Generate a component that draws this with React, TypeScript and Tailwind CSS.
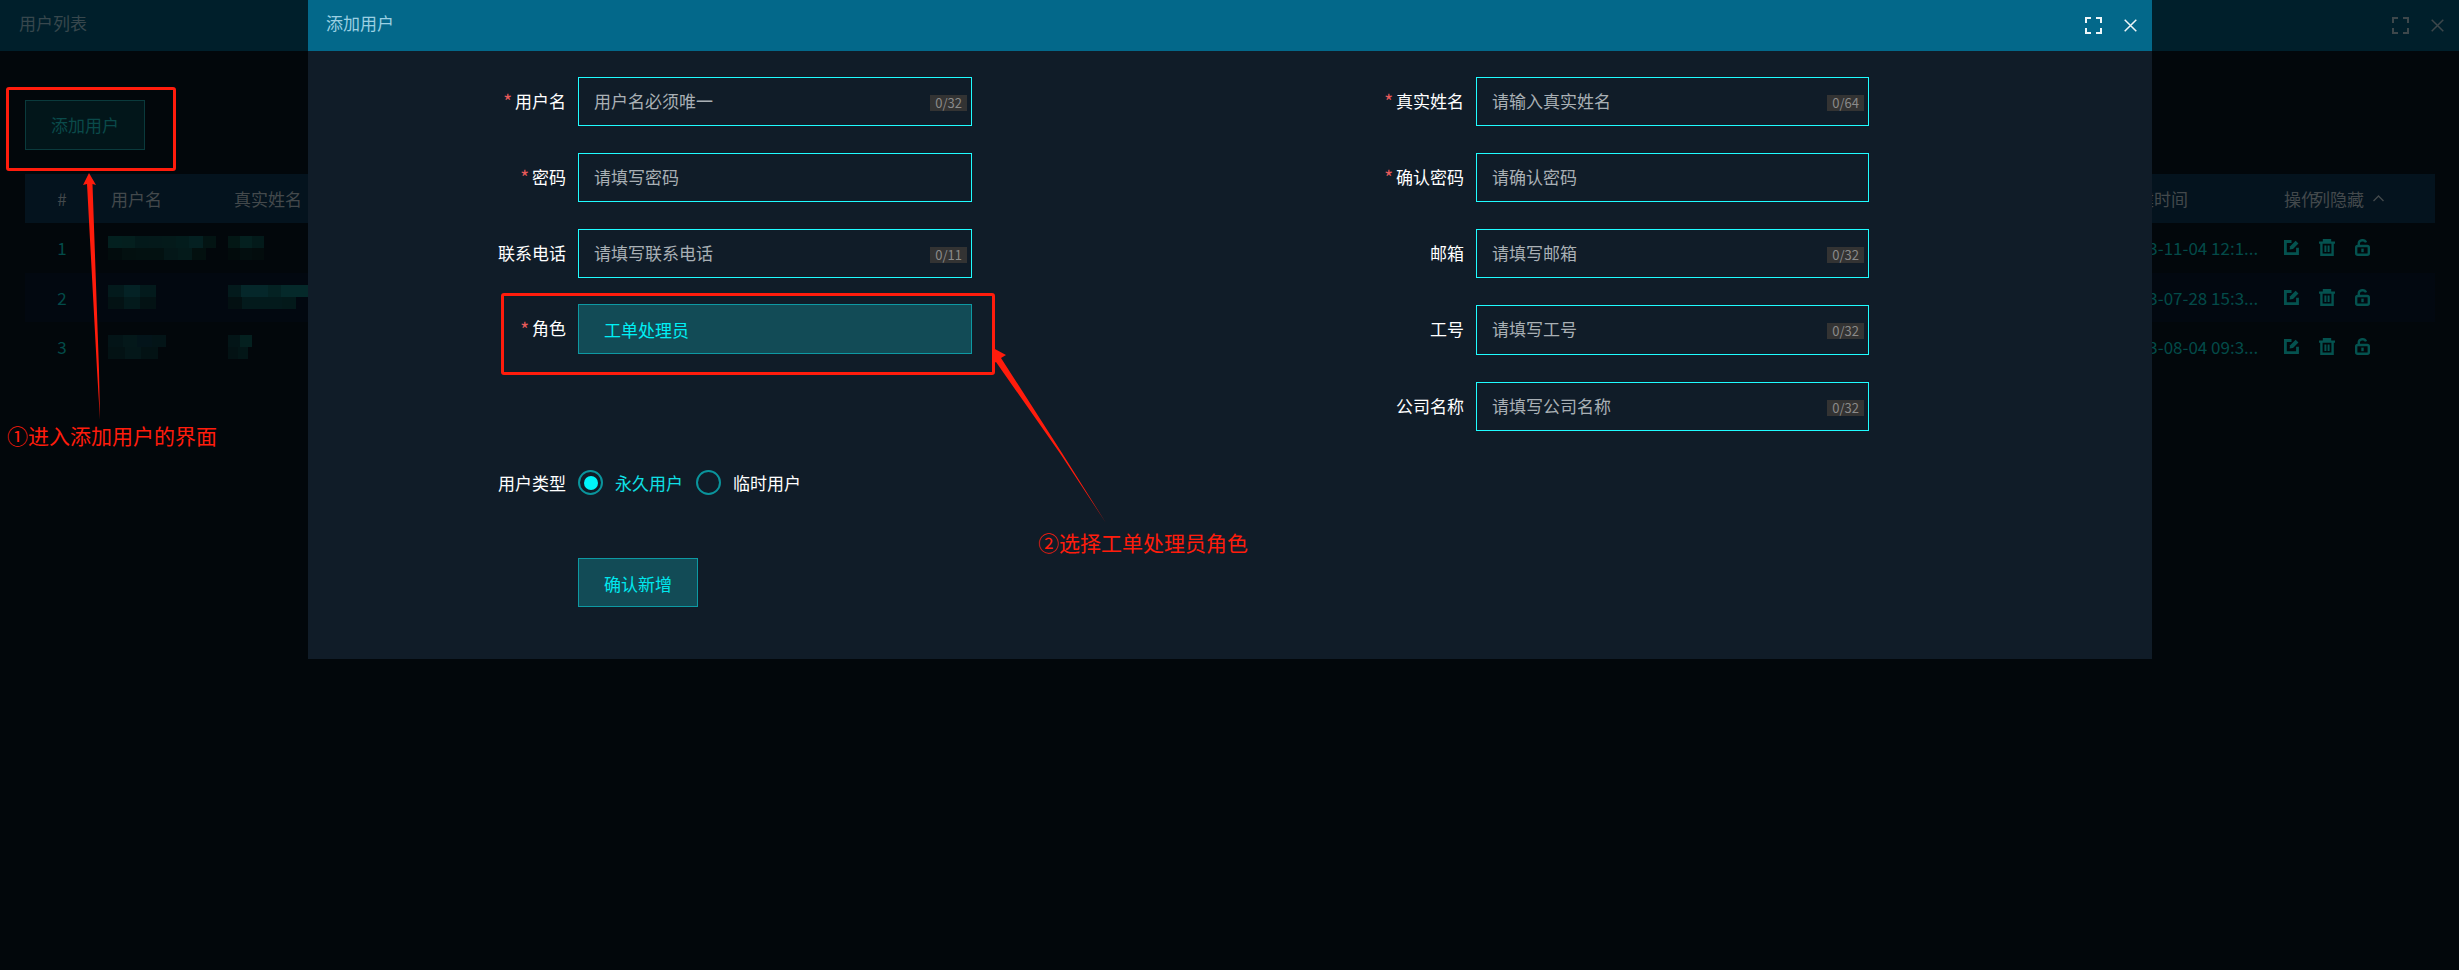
import React from "react";

const font = { fontFamily: '"Noto Sans CJK SC", "Noto Sans", sans-serif' };

function FullIcon({ className }: { className: string }) {
  return (
    <svg viewBox="0 0 17 17" className={className} fill="none" stroke="currentColor" strokeWidth="2">
      <path d="M1 6V1h5M11 1h5v5M16 11v5h-5M6 16H1v-5" />
    </svg>
  );
}
function CloseIcon({ className }: { className: string }) {
  return (
    <svg viewBox="0 0 13 13" className={className} fill="none" stroke="currentColor" strokeWidth="1.5">
      <path d="M0.7 0.7l11.6 11.6M12.3 0.7L0.7 12.3" />
    </svg>
  );
}
function EditIcon() {
  return (
    <svg viewBox="0 0 16 16" className="w-[15px] h-[15px]" fill="none" stroke="currentColor">
      <path d="M8 1.6H1.5v12.9h12.9V8.2" strokeWidth="3" />
      <path d="M6 10.2l.5-3.6L12.4.8 15.4 3.8 9.6 9.7z" fill="currentColor" stroke="none" />
    </svg>
  );
}
function TrashIcon() {
  return (
    <svg viewBox="0 0 16 17" className="w-[16px] h-[17px]" fill="none" stroke="currentColor" strokeWidth="2.4">
      <path d="M0 3.6h16M5 3.6V1.2h6v2.4M2.4 3.6v12.2h11.2V3.6" />
      <path d="M6.4 6.5v6.5M9.6 6.5v6.5" strokeWidth="2" />
    </svg>
  );
}
function LockIcon() {
  return (
    <svg viewBox="0 0 15 17" className="w-[15px] h-[17px]" fill="none" stroke="currentColor" strokeWidth="2.4">
      <rect x="1.2" y="7" width="12.6" height="8.8" rx="1.5" />
      <path d="M3.8 7V4.2a3.7 3.2 0 0 1 7.2-.8" />
      <path d="M7.5 9.6v3.6" />
    </svg>
  );
}

function Blur({ rows }: { rows: { w: number; c: string[] }[] }) {
  return (
    <div className="flex flex-col">
      {rows.map((r, i) => (
        <div key={i} className="flex h-[12px]" style={{ width: r.w }}>
          {r.c.map((c, j) => (
            <div key={j} className="flex-1 h-full" style={{ background: c }} />
          ))}
        </div>
      ))}
    </div>
  );
}

const tableRows = [
  {
    n: "1",
    t: "2023-11-04 12:1...",
    bg: "",
    user: [
      { w: 108, c: ["#03201f", "#041f1e", "#03191a", "#04191a", "#041a1a", "#031c1c", "#042021", "#031413"] },
      { w: 98, c: ["#020c0d", "#031010", "#031111", "#031111", "#041718", "#041a1a", "#03100f"] },
    ],
    name: [
      { w: 36, c: ["#031715", "#04201f", "#031a1a"] },
      { w: 36, c: ["#020b0c", "#030e0f", "#030c0d"] },
    ],
  },
  {
    n: "2",
    t: "2023-07-28 15:3...",
    bg: "bg-[#020810]",
    user: [
      { w: 48, c: ["#031a1c", "#042225", "#031a1c"] },
      { w: 48, c: ["#031214", "#031a1c", "#031214"] },
    ],
    name: [
      { w: 80, c: ["#031a1c", "#05272a", "#05272a", "#042223", "#05292a", "#05292a"] },
      { w: 68, c: ["#031012", "#031a1c", "#031a1c", "#031a1c", "#03191a"] },
    ],
  },
  {
    n: "3",
    t: "2023-08-04 09:3...",
    bg: "",
    user: [
      { w: 58, c: ["#031417", "#04181a", "#03141a", "#031417"] },
      { w: 50, c: ["#031214", "#041719", "#031214"] },
    ],
    name: [
      { w: 24, c: ["#031517", "#04201f"] },
      { w: 20, c: ["#031214", "#031617"] },
    ],
  },
];

function Counter({ text }: { text: string }) {
  return (
    <span className="absolute right-[4px] top-[17px] h-[16px] px-[5px] bg-[#333333] text-[#8a8a8a] text-[13px] leading-[16px]">
      {text}
    </span>
  );
}

function Star() {
  return <span className="text-[#e85a5a] text-[19px] leading-none mr-[3px]">*</span>;
}

function Field({
  label,
  required,
  placeholder,
  counter,
  className = "h-[49px] mb-[27px]",
  inputWidth = "w-[394px]",
}: {
  label: string;
  required?: boolean;
  placeholder: string;
  counter?: string;
  className?: string;
  inputWidth?: string;
}) {
  return (
    <div className={`flex items-center ${className}`}>
      <div className="w-[258px] flex justify-end items-center text-[17px] text-white pb-[2px]">
        {required && <Star />}
        {label}
      </div>
      <div
        className={`relative ml-[12px] ${inputWidth} h-full border border-[#1ffcff] flex items-center pl-[15px] pb-[2px] text-[17px] text-[#a9b0b5]`}
      >
        {placeholder}
        {counter && <Counter text={counter} />}
      </div>
    </div>
  );
}

export default function App() {
  return (
    <div className="relative w-[2459px] h-[970px] overflow-hidden bg-[#02070b]" style={font}>
      {/* page behind the modal */}
      <div className="h-[51px] bg-[#001f2b] flex items-center justify-between pl-[19px] pr-[15px]">
        <span className="text-[17px] text-[#37474d] -mt-[5px]">用户列表</span>
        <div className="flex items-center gap-[22px] text-[#3d474b]">
          <FullIcon className="w-[17px] h-[17px]" />
          <CloseIcon className="w-[13px] h-[13px]" />
        </div>
      </div>
      <div className="pt-[49px] pl-[25px] pr-[24px]">
        <button className="w-[120px] h-[50px] border border-[#0a3a3c] bg-[#02161a] text-[#0a4a4a] text-[17px]">
          添加用户
        </button>
        <div className="mt-[24px] h-[49px] flex items-center bg-[#04131e] text-[17px] text-[#43494c]">
          <div className="w-[86px] pr-[12px] text-center">#</div>
          <div className="w-[123px]">用户名</div>
          <div className="flex-1">真实姓名</div>
          <div className="w-[164px]">创建时间</div>
          <div className="w-[151px] flex items-center">
            <span className="w-[89px] whitespace-nowrap">
              操作<span className="-ml-[5px]">列隐藏</span>
            </span>
            <svg viewBox="0 0 11 7" className="w-[11px] h-[7px]" fill="none" stroke="currentColor" strokeWidth="1.4">
              <path d="M0.5 6L5.5 1l5 5" />
            </svg>
          </div>
        </div>
        {tableRows.map((r) => (
          <div key={r.n} className={`h-[49.5px] flex items-center text-[17px] text-[#034b49] ${r.bg}`}>
            <div className="w-[86px] pr-[12px] text-center">{r.n}</div>
            <div className="w-[123px] -ml-[3px] mr-[3px]">
              <Blur rows={r.user} />
            </div>
            <div className="flex-1 -ml-[6px]">
              <Blur rows={r.name} />
            </div>
            <div className="w-[164px] whitespace-nowrap">{r.t}</div>
            <div className="w-[151px] flex items-center gap-[20px] text-[#04524f]">
              <EditIcon />
              <TrashIcon />
              <LockIcon />
            </div>
          </div>
        ))}
      </div>

      {/* modal */}
      <div className="absolute left-[308px] top-0 w-[1844px] h-[659px] bg-[#101c28]">
        <div className="h-[51px] bg-[#03688a] flex items-center justify-between pl-[18px] pr-[15px]">
          <span className="text-[17px] text-[#9bd0e2] -mt-[5px]">添加用户</span>
          <div className="flex items-center gap-[22px] text-[#eef6f8]">
            <FullIcon className="w-[17px] h-[17px]" />
            <CloseIcon className="w-[13px] h-[13px]" />
          </div>
        </div>
        <div className="flex pt-[26px]">
          <div className="w-[898px]">
            <Field label="用户名" required placeholder="用户名必须唯一" counter="0/32" />
            <Field label="密码" required placeholder="请填写密码" />
            <Field label="联系电话" placeholder="请填写联系电话" counter="0/11" className="h-[49px] mb-[26px]" />
            <div className="flex items-center h-[50px] mb-[104px]">
              <div className="w-[258px] flex justify-end items-center text-[17px] text-white pb-[2px]">
                <Star />
                角色
              </div>
              <div className="ml-[12px] w-[394px] h-full border border-[#0d99a3] bg-[#124b56] flex items-center pl-[25px] pt-[2px] text-[17px] text-[#00f0f5]">
                工单处理员
              </div>
            </div>
            <div className="flex items-center h-[49px] mb-[51px] text-[17px]">
              <div className="w-[258px] text-right text-white">用户类型</div>
              <div className="ml-[12px] w-[25px] h-[25px] rounded-full border-[2px] border-[#0a949c] flex items-center justify-center">
                <div className="w-[14px] h-[14px] rounded-full bg-[#00f5fa]" />
              </div>
              <span className="ml-[12px] w-[69px] text-[#0fe0e6]">永久用户</span>
              <div className="ml-[12px] w-[25px] h-[25px] rounded-full border-[2px] border-[#0a949c]" />
              <span className="ml-[12px] text-white">临时用户</span>
            </div>
            <div className="pl-[270px]">
              <button className="w-[120px] h-[49px] pt-[2px] border border-[#0d99a3] bg-[#124b56] text-[17px] text-[#00e8ee]">
                确认新增
              </button>
            </div>
          </div>
          <div>
            <Field label="真实姓名" required placeholder="请输入真实姓名" counter="0/64" inputWidth="w-[393px]" />
            <Field label="确认密码" required placeholder="请确认密码" inputWidth="w-[393px]" />
            <Field label="邮箱" placeholder="请填写邮箱" counter="0/32" inputWidth="w-[393px]" />
            <Field label="工号" placeholder="请填写工号" counter="0/32" className="h-[50px] mb-[27px]" inputWidth="w-[393px]" />
            <Field label="公司名称" placeholder="请填写公司名称" counter="0/32" inputWidth="w-[393px]" />
          </div>
        </div>
      </div>

      {/* red annotations drawn over the screenshot */}
      <div className="absolute left-[6px] top-[87px] w-[170px] h-[84px] border-[3px] border-[#ff1c0c] rounded-[3px]" />
      <div className="absolute left-[501px] top-[293px] w-[494px] h-[82px] border-[3px] border-[#ff1c0c] rounded-[3px]" />
      <svg className="absolute left-0 top-0 pointer-events-none" width="2459" height="970" fill="#ff1c0c">
        <path d="M89 173L96 185L92.5 184L99 370L100 420L97 370L87 184L83 185Z" />
        <path d="M993 348L1006 355L1001 358L1062 453L1106 523L1060.5 454L996 362L994 363Z" />
      </svg>
      <span className="absolute left-[7px] top-[420px] text-[21px] leading-[30px] text-[#ff1c0c] whitespace-nowrap">
        ①进入添加用户的界面
      </span>
      <span className="absolute left-[1038px] top-[527px] text-[21px] leading-[30px] text-[#ff1c0c] whitespace-nowrap">
        ②选择工单处理员角色
      </span>
    </div>
  );
}
